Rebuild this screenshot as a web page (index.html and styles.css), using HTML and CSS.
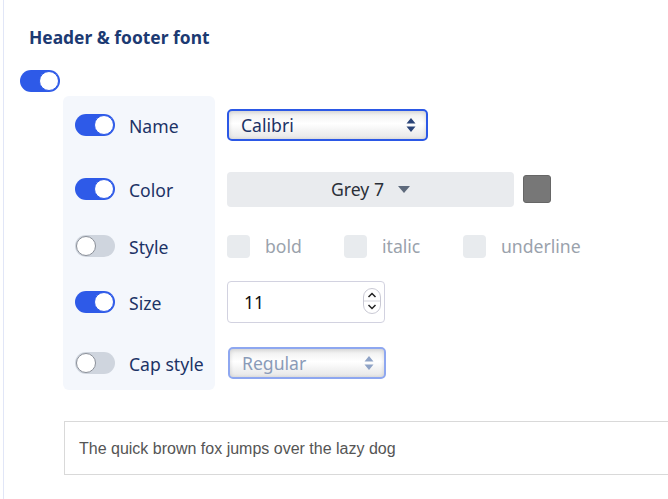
FILE: index.html
```html
<!DOCTYPE html>
<html lang="en" dir="ltr">
  <head>
    <meta charset="utf-8">
    <title>Header &amp; footer font</title>
    <link rel="stylesheet" href="styles.css">
  </head>
  <body>
    <div class="page">
      <h2 class="section-title">Header &amp; footer font</h2>
      <div class="master-row">
        <span class="toggle on"></span>
      </div>

      <div class="font-grid">
        <div class="panel"></div>

        <div class="cell-label r1"><span class="toggle on"></span><span class="label">Name</span></div>
        <div class="cell-ctrl r1">
          <div class="select active">
            <span>Calibri</span>
            <svg class="updown" width="10" height="16" viewBox="0 0 10 16"><path d="M5 1 L9.5 6.5 H0.5 Z M5 15 L9.5 9.5 H0.5 Z" fill="#2b4478"/></svg>
          </div>
        </div>

        <div class="cell-label r2"><span class="toggle on"></span><span class="label">Color</span></div>
        <div class="cell-ctrl r2">
          <div class="color-btn">Grey 7 <span class="caret"></span></div>
          <span class="swatch"></span>
        </div>

        <div class="cell-label r3"><span class="toggle"></span><span class="label">Style</span></div>
        <div class="cell-ctrl r3 styles">
          <label class="check"><span class="box"></span>bold</label>
          <label class="check"><span class="box"></span>italic</label>
          <label class="check"><span class="box"></span>underline</label>
        </div>

        <div class="cell-label r4"><span class="toggle on"></span><span class="label">Size</span></div>
        <div class="cell-ctrl r4">
          <div class="number">
            <span>11</span>
            <span class="spin">
              <svg width="18" height="26" viewBox="0 0 18 26"><rect x="0.5" y="0.5" width="17" height="25" rx="8.5" fill="#fff" stroke="#c9c9d4"/><line x1="1" y1="13" x2="17" y2="13" stroke="#d5d5dd"/><path d="M5.5 9 L9 5.5 L12.5 9" fill="none" stroke="#222" stroke-width="1.5"/><path d="M5.5 17 L9 20.5 L12.5 17" fill="none" stroke="#222" stroke-width="1.5"/></svg>
            </span>
          </div>
        </div>

        <div class="cell-label r5"><span class="toggle"></span><span class="label">Cap style</span></div>
        <div class="cell-ctrl r5">
          <div class="select disabled">
            <span>Regular</span>
            <svg class="updown" width="10" height="16" viewBox="0 0 10 16"><path d="M5 1 L9.5 6.5 H0.5 Z M5 15 L9.5 9.5 H0.5 Z" fill="#8fa3c6"/></svg>
          </div>
        </div>
      </div>

      <div class="preview">The quick brown fox jumps over the lazy dog</div>
    </div>
  </body>
</html>
```

FILE: styles.css
```css
html, body {
  margin: 0;
  padding: 0;
  background-color: #fff;
  font-family: "Noto Sans", "Open Sans", sans-serif;
  overflow: hidden;
}

.page {
  margin-left: 3px;
  border-left: 1px solid #e1e6f7;
  min-height: 499px;
  padding: 25px 0 0 16px;
  box-sizing: border-box;
}

.section-title {
  margin: 0 0 0 9px;
  font-size: 17.4px;
  line-height: 24px;
  font-weight: 700;
  color: #1c3a72;
}

.master-row {
  margin-top: 21px;
  height: 22px;
}

/* toggle switch */
.toggle {
  display: inline-block;
  position: relative;
  width: 40px;
  height: 22px;
  border-radius: 11px;
  background-color: #cfd5de;
  flex: none;
}

.toggle::after {
  content: "";
  position: absolute;
  top: 1px;
  left: 1px;
  width: 18px;
  height: 18px;
  border-radius: 50%;
  background-color: #fff;
  border: 1px solid #8a8f98;
}

.toggle.on {
  background-color: #2e5ae8;
}

.toggle.on::after {
  left: auto;
  right: 1px;
  border-color: #2e5ae8;
}

.font-grid {
  display: grid;
  grid-template-columns: 152px auto;
  grid-template-rows: 58px 70px 44px 68px 54px;
  column-gap: 12px;
  margin: 4px 0 0 43px;
}

.panel {
  grid-column: 1;
  grid-row: 1 / span 5;
  background-color: #f4f7fc;
  border-radius: 6px;
}

.cell-label {
  grid-column: 1;
  display: flex;
  align-items: center;
  padding-left: 12px;
  gap: 14px;
}

.cell-ctrl {
  grid-column: 2;
  display: flex;
  align-items: center;
}

.r1 { grid-row: 1; }
.r2 { grid-row: 2; }
.r3 { grid-row: 3; }
.r4 { grid-row: 4; }
.r5 { grid-row: 5; }

.label {
  font-size: 17.6px;
  color: #1c3366;
  padding-top: 1px;
}

.select {
  box-sizing: border-box;
  display: flex;
  align-items: center;
  justify-content: space-between;
  border-radius: 5px;
  padding: 0 10px 0 12px;
  font-size: 17.6px;
  background: linear-gradient(#ececec, #ffffff 45%, #e6e6e6);
  box-shadow: inset 0 1px 4px rgba(0, 0, 0, 0.14);
}

.select.active {
  width: 201px;
  height: 32px;
  border: 2px solid #2b58e6;
  color: #1c3366;
}

.select.disabled {
  width: 158px;
  height: 32px;
  border: 2px solid #8ea7f0;
  color: #8a9bb8;
  margin-left: 1px;
}

.color-btn {
  width: 287px;
  height: 35px;
  border-radius: 4px;
  background-color: #e9ebee;
  display: flex;
  align-items: center;
  justify-content: center;
  gap: 10px;
  font-size: 17.6px;
  color: #2a2f38;
  box-sizing: border-box;
}

.caret {
  width: 0;
  height: 0;
  border-left: 6px solid transparent;
  border-right: 6px solid transparent;
  border-top: 7px solid #5e6a7c;
  margin-left: 4px;
}

.swatch {
  width: 26px;
  height: 26px;
  margin-left: 9px;
  border-radius: 3px;
  background-color: #777;
  border: 1px solid #666;
}

.check {
  display: flex;
  align-items: center;
  font-size: 17.6px;
  color: #9aa2ac;
}

.check .box {
  width: 23px;
  height: 23px;
  border-radius: 4px;
  background-color: #e8ebee;
  margin-right: 15px;
}

.check:nth-child(1) { width: 117px; }
.check:nth-child(2) { width: 119px; }

.number {
  box-sizing: border-box;
  width: 158px;
  height: 42px;
  border: 1px solid #d2d2e0;
  border-radius: 4px;
  display: flex;
  align-items: center;
  justify-content: space-between;
  padding: 0 3px 0 16px;
  font-size: 17.6px;
  color: #111;
}

.spin {
  display: flex;
  margin-top: -3px;
}

.preview {
  margin: 31px 0 0 44px;
  height: 54px;
  border: 1px solid #d9d9d9;
  border-right: none;
  box-sizing: border-box;
  display: flex;
  align-items: center;
  padding: 2px 0 0 14px;
  font-family: "Liberation Sans", Arial, sans-serif;
  font-size: 16px;
  color: #555;
}
```
